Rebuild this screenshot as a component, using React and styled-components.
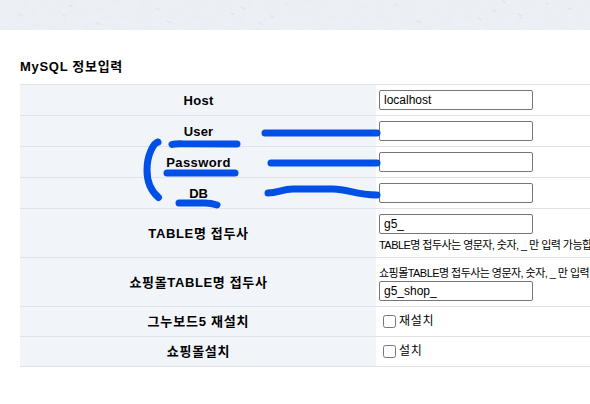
import styled, { createGlobalStyle } from 'styled-components';

const GlobalStyle = createGlobalStyle`
  * {
    box-sizing: border-box;
  }

  body {
    margin: 0;
    overflow: hidden;
    background: #fff;
    color: #000;
    font-family: "Liberation Sans", "Noto Sans CJK KR", sans-serif;
    font-size: 12px;
  }
`;

const Page = styled.div`
  position: relative;
  height: 404px;
  overflow: hidden;
`;

const Banner = styled.header`
  height: 30px;
  background: #ecf0f5;

  svg {
    display: block;
  }
`;

const Content = styled.form`
  padding: 27px 0 0 20px;
`;

const Title = styled.h2`
  height: 27px;
  margin: 0;
  font-size: 13px;
  font-weight: 700;
  line-height: 20px;
  letter-spacing: 0.7px;
  white-space: nowrap;
`;

const Rows = styled.div`
  width: 680px;
  border-top: 1px solid #dde3e9;
`;

const Row = styled.div`
  display: grid;
  grid-template-columns: 356px 1fr;
  height: ${({ $height }) => $height}px;
  border-bottom: 1px solid #dde3e9;
`;

const Label = styled.label`
  display: flex;
  align-items: center;
  justify-content: center;
  padding-bottom: ${({ $lift }) => $lift || 0}px;
  padding-left: 1px;
  background: #f1f5fa;
  font-size: 13px;
  font-weight: 700;
  letter-spacing: ${({ $spacing }) => $spacing}px;
  white-space: nowrap;
`;

const Cell = styled.div`
  display: flex;
  flex-direction: column;
  justify-content: center;
  padding-left: 3px;
`;

const TextInput = styled.input`
  width: 154px;
  height: 20px;
  padding: 0 4px;
  border: 1px solid #767676;
  border-radius: 2px;
  background: #fff;
  color: #000;
  font-family: "Liberation Sans", sans-serif;
  font-size: 12px;
  outline: none;
`;

const Help = styled.span`
  height: ${({ $height }) => $height}px;
  font-size: 11px;
  line-height: ${({ $line }) => $line}px;
  letter-spacing: -0.55px;
  white-space: nowrap;
`;

const CheckLine = styled.div`
  display: flex;
  align-items: center;
  padding: 0 0 1px 4px;
  line-height: 16px;
`;

const Checkbox = styled.input`
  width: 13px;
  height: 13px;
  margin: 1px 3px 0 0;
`;

const CheckText = styled.span`
  letter-spacing: 0.7px;
`;

const Strokes = styled.svg`
  position: absolute;
  top: 0;
  left: 0;
  pointer-events: none;
`;

const fields = [
  { id: 'host', label: 'Host', value: 'localhost', spacing: 0.3 },
  { id: 'user', label: 'User', value: '', spacing: 0.15 },
  { id: 'password', label: 'Password', value: '', spacing: 0.4 },
  { id: 'db', label: 'DB', value: '', spacing: -0.2 },
];

const specks = [
  [19, 14, 3], [63, 15, 2], [69, 5, 3], [97, 23, 2], [156, 8, 3], [167, 21, 4],
  [231, 13, 3], [241, 7, 4], [259, 23, 3], [271, 16, 3], [285, 4, 2], [417, 21, 3],
  [395, 4, 2], [478, 18, 3], [493, 10, 3], [502, 1, 3], [518, 14, 3], [520, 17, 2],
  [546, 3, 2], [568, 8, 3],
];

const Texture = () =>
  <svg width="590" height="30">
    <filter id="grain" x="0" y="0" width="100%" height="100%">
      <feTurbulence type="fractalNoise" baseFrequency="0.13 0.25" numOctaves="3" seed="4" />
      <feColorMatrix values="0 0 0 0 0.78  0 0 0 0 0.81  0 0 0 0 0.85  1.6 0 0 0 -0.7" />
    </filter>
    <rect width="590" height="30" filter="url(#grain)" opacity="0.5" />
    {specks.map(([x, y, size]) =>
      <path key={`${x}-${y}`} d={`M${x} ${y}l${size} ${size / 2}`} stroke="#dde1e7" strokeWidth="1.2" strokeLinecap="round" />
    )}
  </svg>

const App = () =>
  <>
    <GlobalStyle />
    <Page>
      <Banner><Texture /></Banner>
      <Content>
        <Title>MySQL 정보입력</Title>
        <Rows>
          {fields.map(({ id, label, value, spacing }) =>
            <Row key={id} $height={31}>
              <Label htmlFor={id} $spacing={spacing}>{label}</Label>
              <Cell><TextInput id={id} defaultValue={value} /></Cell>
            </Row>
          )}
          <Row $height={49}>
            <Label htmlFor="prefix" $spacing={0.65} $lift={2}>TABLE명 접두사</Label>
            <Cell>
              <TextInput id="prefix" defaultValue="g5_" />
              <Help $height={18} $line={23}>TABLE명 접두사는 영문자, 숫자, _ 만 입력 가능합니다.</Help>
            </Cell>
          </Row>
          <Row $height={49}>
            <Label htmlFor="shop-prefix" $spacing={0.65} $lift={2}>쇼핑몰TABLE명 접두사</Label>
            <Cell>
              <Help $height={18} $line={20}>쇼핑몰TABLE명 접두사는 영문자, 숫자, _ 만 입력 가능합니다.</Help>
              <TextInput id="shop-prefix" defaultValue="g5_shop_" />
            </Cell>
          </Row>
          <Row $height={30}>
            <Label htmlFor="reinstall" $spacing={0.8} $lift={2}>그누보드5 재설치</Label>
            <Cell>
              <CheckLine><Checkbox type="checkbox" id="reinstall" /><CheckText>재설치</CheckText></CheckLine>
            </Cell>
          </Row>
          <Row $height={30}>
            <Label htmlFor="shop" $spacing={0.7} $lift={2}>쇼핑몰설치</Label>
            <Cell>
              <CheckLine><Checkbox type="checkbox" id="shop" /><CheckText>설치</CheckText></CheckLine>
            </Cell>
          </Row>
        </Rows>
      </Content>
      <Strokes width="590" height="404" fill="none" stroke="#004fe6" strokeWidth="7" strokeLinecap="round" strokeLinejoin="round">
        <path d="M172 144.5Q175 143.5 182 143.7L237 144" />
        <path d="M167 173H235" />
        <path d="M179 203H205Q211 203 217 205" />
        <path d="M158 142C154 143 147 154 147 170C147 184 152 192 158.500 197.500" />
        <path d="M265 133H377" />
        <path d="M271 163H377" />
        <path d="M268 193C278 193 282 189 293 189H333C348 189 356 195 377 195" />
      </Strokes>
    </Page>
  </>

export default App;
